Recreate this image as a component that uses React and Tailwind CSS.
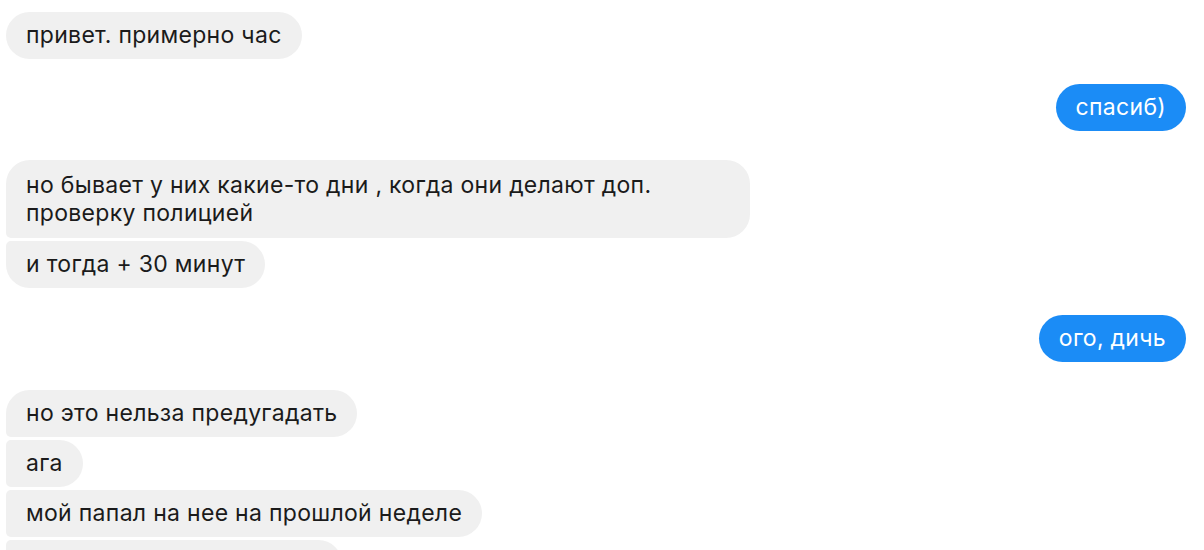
const messages = [
  { id: 1, side: "in", mt: "mt-0", group: [{ text: "привет. примерно час" }] },
  { id: 2, side: "out", mt: "mt-[25px]", group: [{ text: "спасиб)" }] },
  {
    id: 3,
    side: "in",
    mt: "mt-[29px]",
    group: [
      { lines: ["но бывает у них какие-то дни , когда они делают доп.", "проверку полицией"] },
      { text: "и тогда + 30 минут" },
    ],
  },
  { id: 4, side: "out", mt: "mt-[27px]", group: [{ text: "ого, дичь" }] },
  {
    id: 5,
    side: "in",
    mt: "mt-[28px]",
    group: [
      { text: "но это нельза предугадать" },
      { text: "ага" },
      { text: "мой папал на нее на прошлой неделе" },
      { text: "и стоял там полтора часа" },
    ],
  },
];

function cornerClass(side, i, n) {
  if (n === 1) return "rounded-[24px]";
  const first = i === 0;
  const last = i === n - 1;
  if (side === "in") {
    if (first) return "rounded-[24px] rounded-bl-[5px]";
    if (last) return "rounded-[24px] rounded-tl-[5px]";
    return "rounded-[24px] rounded-tl-[5px] rounded-bl-[5px]";
  }
  if (first) return "rounded-[24px] rounded-br-[5px]";
  if (last) return "rounded-[24px] rounded-tr-[5px]";
  return "rounded-[24px] rounded-tr-[5px] rounded-br-[5px]";
}

function Bubble({ b, side, corners }) {
  const color = side === "in" ? "bg-[#f0f0f0] text-[#1b1b1b]" : "bg-[#1b8cf6] text-white";
  if (b.lines) {
    return (
      <div className={`${color} ${corners} w-[744px] px-[20px] py-[11px] text-[23px] leading-[28px] tracking-[0.3px]`}>
        {b.lines.map((l, i) => (
          <div key={i} className="whitespace-nowrap">{l}</div>
        ))}
      </div>
    );
  }
  return (
    <div className={`${color} ${corners} whitespace-nowrap px-[20px] py-[10px] text-[23px] leading-[27px] tracking-[0.3px]`}>
      {b.text}
    </div>
  );
}

export default function App() {
  return (
    <div
      className="w-[1204px] h-[550px] overflow-hidden bg-white pt-[12px] pl-[6px] pr-[18px] flex flex-col"
      style={{ fontFamily: 'Inter, "Noto Sans", sans-serif' }}
    >
      {messages.map((m) => (
        <div
          key={m.id}
          className={`${m.mt} flex flex-col gap-[3px] ${m.side === "in" ? "items-start" : "items-end"}`}
        >
          {m.group.map((b, i) => (
            <Bubble key={i} b={b} side={m.side} corners={cornerClass(m.side, i, m.group.length)} />
          ))}
        </div>
      ))}
    </div>
  );
}
